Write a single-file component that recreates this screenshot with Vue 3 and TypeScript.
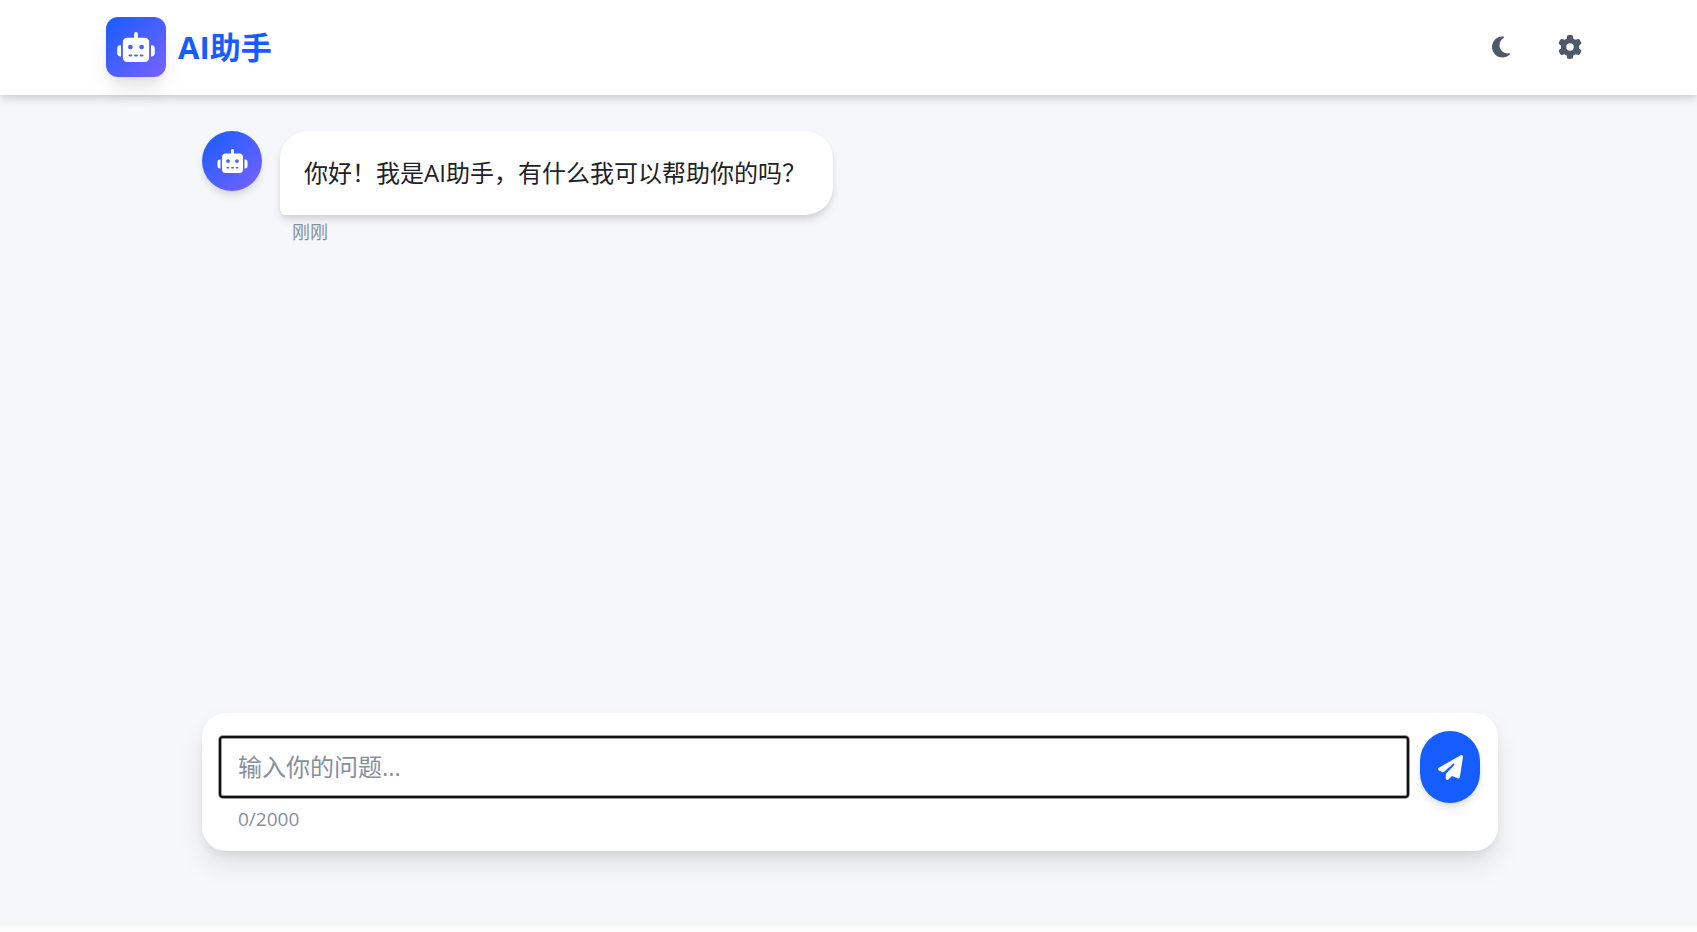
<script setup lang="ts">
import { computed, ref } from 'vue'

interface Message {
  id: number
  text: string
  time: string
}

const ROBOT =
  'M320 0c17.700 0 32 14.300 32 32V96H472c39.800 0 72 32.200 72 72V440c0 39.800-32.200 72-72 72H168c-39.800 0-72-32.200-72-72V168c0-39.800 32.200-72 72-72H288V32c0-17.700 14.300-32 32-32zM208 384c-8.800 0-16 7.200-16 16s7.200 16 16 16h32c8.800 0 16-7.200 16-16s-7.200-16-16-16H208zm96 0c-8.800 0-16 7.200-16 16s7.200 16 16 16h32c8.800 0 16-7.200 16-16s-7.200-16-16-16H304zm96 0c-8.800 0-16 7.200-16 16s7.200 16 16 16h32c8.800 0 16-7.200 16-16s-7.200-16-16-16H400zM264 256a40 40 0 1 0 -80 0 40 40 0 1 0 80 0zm152 40a40 40 0 1 0 0-80 40 40 0 1 0 0 80zM48 224H64V416H48c-26.500 0-48-21.500-48-48V272c0-26.500 21.500-48 48-48zm544 0c26.500 0 48 21.500 48 48v96c0 26.500-21.500 48-48 48H576V224h16z'

const limit = 2000
const draft = ref('')
const dark = ref(false)
const messages = ref<Message[]>([
  { id: 1, text: '你好！我是AI助手，有什么我可以帮助你的吗？', time: '刚刚' },
])
const counter = computed(() => `${draft.value.length}/${limit}`)

function send() {
  const text = draft.value.trim()
  if (!text) return
  messages.value.push({ id: messages.value.length + 1, text, time: '刚刚' })
  draft.value = ''
}
</script>

<template>
  <div class="page">
    <header class="header">
      <div class="header-inner">
        <div class="brand">
          <span class="logo">
            <svg class="logo-icon" viewBox="0 0 640 512" aria-hidden="true"><path :d="ROBOT" /></svg>
          </span>
          <h1 class="title">AI助手</h1>
        </div>
        <nav class="actions">
          <button type="button" class="action" aria-label="切换主题" @click="dark = !dark">
            <svg class="moon" viewBox="0 0 384 512" aria-hidden="true">
              <path d="M223.500 32C100 32 0 132.300 0 256S100 480 223.500 480c60.600 0 115.500-24.200 155.800-63.400c5-4.900 6.300-12.500 3.100-18.700s-10.100-9.700-17-8.500c-9.800 1.700-19.800 2.600-30.100 2.600c-96.900 0-175.500-78.800-175.500-176c0-65.800 36-123.100 89.300-153.300c6.100-3.500 9.200-10.500 7.700-17.300s-7.300-11.900-14.300-12.500c-6.300-.5-12.600-.8-19-.8z" />
            </svg>
          </button>
          <button type="button" class="action" aria-label="设置">
            <svg class="gear" viewBox="0 0 512 512" aria-hidden="true">
              <path d="M495.900 166.600c3.200 8.700 .5 18.400-6.400 24.600l-43.300 39.400c1.100 8.300 1.700 16.800 1.700 25.400s-.6 17.100-1.700 25.400l43.300 39.400c6.900 6.200 9.600 15.900 6.400 24.600c-4.400 11.900-9.700 23.300-15.800 34.300l-4.700 8.100c-6.600 11-14 21.400-22.100 31.200c-5.900 7.200-15.700 9.600-24.500 6.800l-55.700-17.700c-13.400 10.300-28.200 18.900-44 25.400l-12.500 57.100c-2 9.100-9 16.300-18.200 17.800c-13.800 2.300-28 3.500-42.500 3.500s-28.700-1.200-42.500-3.500c-9.200-1.500-16.200-8.700-18.200-17.800l-12.500-57.100c-15.800-6.500-30.600-15.100-44-25.400L83.100 425.900c-8.800 2.800-18.600 .3-24.500-6.800c-8.100-9.800-15.500-20.200-22.100-31.200l-4.700-8.100c-6.100-11-11.400-22.400-15.800-34.300c-3.200-8.700-.5-18.400 6.400-24.600l43.300-39.400C64.600 273.100 64 264.600 64 256s.6-17.100 1.700-25.400L22.400 191.200c-6.900-6.200-9.600-15.900-6.400-24.600c4.400-11.900 9.700-23.300 15.800-34.300l4.700-8.100c6.600-11 14-21.400 22.100-31.200c5.900-7.200 15.700-9.600 24.500-6.800l55.700 17.700c13.400-10.300 28.200-18.900 44-25.400l12.500-57.100c2-9.100 9-16.300 18.200-17.800C227.300 1.200 241.500 0 256 0s28.700 1.200 42.500 3.500c9.200 1.500 16.200 8.700 18.200 17.800l12.500 57.100c15.800 6.500 30.600 15.100 44 25.400l55.700-17.700c8.800-2.800 18.600-.3 24.500 6.800c8.100 9.800 15.500 20.200 22.100 31.200l4.700 8.100c6.100 11 11.400 22.400 15.800 34.300zM256 336a80 80 0 1 0 0-160 80 80 0 1 0 0 160z" />
            </svg>
          </button>
        </nav>
      </div>
    </header>

    <main class="chat">
      <section class="messages">
        <article v-for="m in messages" :key="m.id" class="message">
          <span class="avatar">
            <svg class="avatar-icon" viewBox="0 0 640 512" aria-hidden="true"><path :d="ROBOT" /></svg>
          </span>
          <div class="message-body">
            <p class="bubble">{{ m.text }}</p>
            <time class="time">{{ m.time }}</time>
          </div>
        </article>
      </section>

      <form class="composer" @submit.prevent="send">
        <div class="composer-row">
          <textarea
            v-model="draft"
            class="field"
            rows="1"
            :maxlength="limit"
            placeholder="输入你的问题..."
            aria-label="输入你的问题"
          ></textarea>
          <button type="submit" class="send" aria-label="发送">
            <svg class="send-icon" viewBox="0 0 512 512" aria-hidden="true">
              <path d="M498.100 5.600c10.100 7 15.400 19.100 13.500 31.200l-64 416c-1.500 9.700-7.400 18.200-16 23s-18.900 5.400-28 1.600L284 427.700l-68.500 74.100c-8.900 9.700-22.900 12.900-35.200 8.100S160 493.200 160 480V396.400c0-4 1.500-7.800 4.200-10.700L331.800 202.800c5.800-6.300 5.600-16-.4-22s-15.700-6.400-22-.7L106 360.800 17.700 316.600C7.100 311.300 .3 300.700 0 288.900s5.900-22.800 16.100-28.700l448-256c10.700-6.100 23.900-5.500 34 1.400z" />
            </svg>
          </button>
        </div>
        <span class="counter">{{ counter }}</span>
      </form>
    </main>
    <footer class="footer"></footer>
  </div>
</template>

<style>
html,
body,
#app {
  height: 100%;
}

body {
  margin: 0;
  background: #f5f7fb;
}
</style>

<style scoped>
.page {
  display: flex;
  flex-direction: column;
  height: 100%;
  overflow: hidden;
  background: #f5f7fb;
  color: #1d2129;
  font-family: 'Segoe UI', 'Open Sans', 'Noto Sans CJK SC', sans-serif;
  font-size: 24px;
  line-height: 36px;
}

.header {
  flex: none;
  background: #fff;
  box-shadow: 0 6px 9px -1px rgba(0, 0, 0, 0.1), 0 3px 6px -1px rgba(0, 0, 0, 0.08);
}

.header-inner {
  display: flex;
  align-items: center;
  justify-content: space-between;
  box-sizing: border-box;
  max-width: 1533px;
  margin: 0 auto;
  padding: 17px 23px 18px 24px;
}

.brand {
  display: flex;
  align-items: center;
  gap: 12px;
}

.logo,
.avatar {
  display: flex;
  flex: none;
  align-items: center;
  justify-content: center;
  width: 60px;
  height: 60px;
  background: linear-gradient(135deg, #165dff, #7b61ff);
}

.logo {
  border-radius: 12px;
  box-shadow: 0 15px 22px -4px rgba(0, 0, 0, 0.1), 0 6px 9px -3px rgba(0, 0, 0, 0.06);
}

.avatar {
  border-radius: 50%;
  box-shadow: 0 6px 9px -1px rgba(0, 0, 0, 0.1), 0 3px 6px -2px rgba(0, 0, 0, 0.06);
}

svg {
  display: block;
  fill: currentColor;
}

.logo-icon {
  width: 38px;
  height: 30px;
  color: #fff;
}

.avatar-icon {
  width: 31px;
  height: 24px;
  color: #fff;
}

.title {
  margin: 0;
  color: #165dff;
  font-size: 31px;
  font-weight: 700;
  line-height: 42px;
}

.actions {
  display: flex;
  gap: 25px;
}

.action {
  display: flex;
  align-items: center;
  justify-content: center;
  width: 44px;
  height: 44px;
  padding: 0;
  border: 0;
  border-radius: 50%;
  background: transparent;
  color: #4e5969;
  cursor: pointer;
}

.moon {
  width: 18px;
  height: 24px;
}

.gear {
  width: 24px;
  height: 24px;
}

.chat {
  display: flex;
  flex: 1;
  flex-direction: column;
  box-sizing: border-box;
  width: 100%;
  min-height: 0;
  max-width: 1347px;
  margin: 0 auto;
  padding: 36px 24px 72px 27px;
}

.messages {
  flex: 1;
}

.message {
  display: flex;
  gap: 18px;
}

.message-body {
  display: flex;
  flex-direction: column;
  align-items: flex-start;
}

.bubble {
  margin: 0;
  padding: 24px 27px 24px 24px;
  border-radius: 28px 28px 28px 6px;
  background: #fff;
  box-shadow: 0 6px 9px -1px rgba(0, 0, 0, 0.1), 0 3px 6px -1px rgba(0, 0, 0, 0.08);
}

.time {
  padding: 4px 12px;
  color: #86909c;
  font-size: 18px;
  line-height: 27px;
}

.composer {
  display: flex;
  flex-direction: column;
  padding: 18px;
  border-radius: 24px;
  background: #fff;
  box-shadow: 0 15px 30px -3px rgba(0, 0, 0, 0.1), 0 6px 12px -3px rgba(0, 0, 0, 0.08);
}

.composer-row {
  display: flex;
  align-items: center;
  gap: 11px;
}

.field {
  flex: 1;
  box-sizing: border-box;
  min-width: 0;
  height: 62px;
  margin: 0 0 0 -1px;
  padding: 11px 17px;
  border: 2px solid #101010;
  border-radius: 4px;
  outline: 0;
  background: #fff;
  box-shadow: 0 0 0 1px #a0a0a0, inset 0 0 0 1px #a0a0a0;
  color: inherit;
  font: inherit;
  resize: none;
  overflow: hidden;
}

.field::placeholder {
  color: #86909c;
}

.send {
  display: flex;
  flex: none;
  align-items: center;
  justify-content: center;
  width: 60px;
  height: 72px;
  padding: 0;
  border: 0;
  border-radius: 30px;
  background: #165dff;
  box-shadow: 0 6px 9px -1px rgba(0, 0, 0, 0.1), 0 3px 6px -2px rgba(0, 0, 0, 0.06);
  color: #fff;
  cursor: pointer;
}

.send-icon {
  width: 25px;
  height: 25px;
}

.counter {
  padding: 4px 18px 2px;
  color: #86909c;
  font-size: 19px;
  line-height: 24px;
}

.footer {
  flex: none;
  height: 9px;
  background: linear-gradient(#f5f5f5, #fff);
}
</style>
